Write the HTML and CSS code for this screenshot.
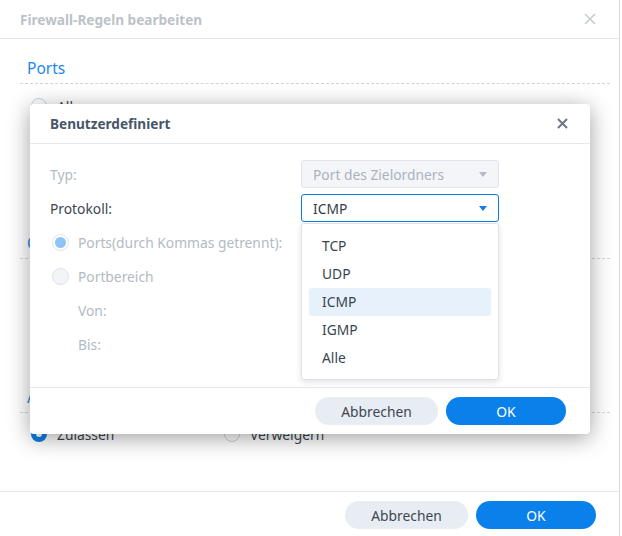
FILE: index.html
```html
<!DOCTYPE html>
<html lang="de">
<head>
<meta charset="utf-8">
<title>Firewall-Regeln bearbeiten</title>
<link rel="stylesheet" href="styles.css">
</head>
<body>
<div class="win">
  <div class="win-head">
    <span class="win-title">Firewall-Regeln bearbeiten</span>
    <svg class="win-close" width="12" height="12" viewBox="0 0 12 12"><path d="M1 1 L11 11 M11 1 L1 11" stroke="#c6ccd3" stroke-width="1.6" fill="none"/></svg>
  </div>
  <div class="win-body">
    <div class="sec-title first">Ports</div>
    <div class="rows">
      <div class="row"><span class="radio"></span><span>Alle</span></div>
      <div class="row"><span class="radio"></span></div>
      <div class="row"><span class="radio on"></span></div>
      <div class="row"></div>
    </div>
    <div class="sec-title">Quell-IP</div>
    <div class="rows">
      <div class="row"><span class="radio on"></span></div>
      <div class="row"><span class="radio"></span></div>
      <div class="row"><span class="radio"></span></div>
    </div>
    <div class="sec-title late">Aktion</div>
    <div class="rows">
      <div class="row opts">
        <span class="opt"><span class="radio on"></span><span>Zulassen</span></span>
        <span class="opt"><span class="radio"></span><span>Verweigern</span></span>
      </div>
    </div>
  </div>
  <div class="win-foot">
    <button class="btn sec w123">Abbrechen</button>
    <button class="btn pri w120">OK</button>
  </div>

  <div class="modal">
    <div class="m-head">
      <span class="m-title">Benutzerdefiniert</span>
      <svg class="m-close" width="11" height="11" viewBox="0 0 11 11"><path d="M1 1 L10 10 M10 1 L1 10" stroke="#6e7884" stroke-width="2" fill="none"/></svg>
    </div>
    <div class="m-body">
      <div class="f-row">
        <span class="f-label dis">Typ:</span>
        <div class="select disabled"><span>Port des Zielordners</span><span class="caret"></span></div>
      </div>
      <div class="f-row">
        <span class="f-label">Protokoll:</span>
        <div class="select active"><span>ICMP</span><span class="caret"></span></div>
      </div>
      <div class="f-row">
        <span class="mradio checked"></span><span class="dis">Ports(durch Kommas getrennt):</span>
      </div>
      <div class="f-row">
        <span class="mradio"></span><span class="dis">Portbereich</span>
      </div>
      <div class="f-row indent"><span class="dis">Von:</span></div>
      <div class="f-row indent"><span class="dis">Bis:</span></div>
    </div>
    <div class="m-foot">
      <button class="btn sec w123">Abbrechen</button>
      <button class="btn pri w120">OK</button>
    </div>

    <ul class="menu">
      <li>TCP</li>
      <li>UDP</li>
      <li class="sel">ICMP</li>
      <li>IGMP</li>
      <li>Alle</li>
    </ul>
  </div>
</div>
</body>
</html>
```
FILE: styles.css
```css
* { box-sizing: border-box; }
html, body {
  margin: 0;
  padding: 0;
  width: 622px;
  height: 536px;
  overflow: hidden;
  background: #ffffff;
  font-family: "Noto Sans", "Open Sans", sans-serif;
  font-size: 13.8px;
  color: #3c4651;
}
.win {
  position: relative;
  width: 620px;
  height: 536px;
  border-right: 1px solid #d8dde3;
  display: flex;
  flex-direction: column;
}
.win-head {
  height: 39px;
  flex: none;
  border-bottom: 1px solid #e3e8ee;
  display: flex;
  align-items: center;
  justify-content: space-between;
  padding: 0 23px 0 20px;
}
.win-title {
  font-weight: bold;
  color: #bcc2c9;
  font-size: 13.6px;
}
.win-body {
  flex: 1;
  padding: 0 9px 0 20px;
}
.sec-title {
  height: 28px;
  line-height: 24px;
  padding-left: 7px;
  font-size: 15.5px;
  color: #1c87ec;
  border-bottom: 1px dashed #cdd6e0;
  margin-top: 9px;
}
.sec-title.first { margin-top: 17px; }
.sec-title.late { margin-top: 22px; }
.rows {
  padding: 8px 0 0 11px;
  display: flex;
  flex-direction: column;
  gap: 6px;
}
.row {
  height: 28px;
  display: flex;
  align-items: center;
  gap: 10px;
  color: #3c4651;
}
.row.opts { gap: 0; margin-top: -1px; }
.opt {
  display: flex;
  align-items: center;
  gap: 10px;
  width: 193px;
}
.radio {
  width: 16px;
  height: 16px;
  border-radius: 50%;
  border: 1px solid #c9d1da;
  background: #fff;
  flex: none;
}
.radio.on {
  border: 5px solid #0a7fe8;
}
.win-foot {
  height: 45px;
  flex: none;
  border-top: 1px solid #e3e8ee;
  display: flex;
  justify-content: flex-end;
  align-items: flex-start;
  gap: 8px;
  padding: 9px 23px 0 0;
}
.btn {
  height: 28px;
  border: none;
  border-radius: 14px;
  font-family: inherit;
  font-size: 13.8px;
  padding: 0;
}
.btn.sec { background: #e8edf3; color: #3c4651; }
.btn.pri { background: #0a80ea; color: #ffffff; }
.w123 { width: 123px; }
.w120 { width: 120px; }

.modal {
  position: absolute;
  left: 30px;
  top: 104px;
  width: 560px;
  height: 330px;
  background: #fff;
  border-radius: 4px;
  box-shadow: 0 4px 22px rgba(0, 0, 0, 0.38);
  display: flex;
  flex-direction: column;
}
.m-head {
  height: 40px;
  flex: none;
  border-bottom: 1px solid #e2e8ef;
  display: flex;
  align-items: center;
  justify-content: space-between;
  padding: 0 22px 0 20px;
}
.m-title {
  font-weight: bold;
  font-size: 13.6px;
  color: #475667;
}
.m-body {
  flex: 1;
  padding: 16px 20px 0;
  display: flex;
  flex-direction: column;
  gap: 6px;
}
.f-row {
  height: 28px;
  display: flex;
  align-items: center;
  flex: none;
}
.f-row.indent { padding-left: 28px; }
.f-label { width: 251px; flex: none; }
.dis { color: #b3bac3; }
.select {
  width: 198px;
  height: 28px;
  border-radius: 3px;
  border: 1px solid #dfe4ea;
  display: flex;
  align-items: center;
  justify-content: space-between;
  padding: 0 11px 0 11px;
}
.select.disabled { background: #f3f5f8; color: #abb3bd; }
.select.active { border-color: #0a7fe8; color: #333d48; }
.caret {
  width: 0;
  height: 0;
  border-left: 4px solid transparent;
  border-right: 4px solid transparent;
  border-top: 5px solid #b5bcc5;
}
.select.active .caret { border-top-color: #0a7fe8; }
.mradio {
  width: 17px;
  height: 17px;
  margin: 0 9px 0 2px;
  border-radius: 50%;
  border: 1px solid #dde3ea;
  background: #f2f4f8;
  flex: none;
  position: relative;
}
.mradio.checked {
  background: #fff;
}
.mradio.checked::after {
  content: "";
  position: absolute;
  left: 2px;
  top: 2px;
  width: 11px;
  height: 11px;
  border-radius: 50%;
  background: #8ec3f5;
}
.m-foot {
  height: 47px;
  flex: none;
  border-top: 1px solid #e2e8ef;
  display: flex;
  justify-content: flex-end;
  align-items: flex-start;
  gap: 8px;
  padding: 9px 24px 0 0;
}
.menu {
  position: absolute;
  left: 271px;
  top: 119px;
  width: 198px;
  height: 157px;
  margin: 0;
  list-style: none;
  padding: 8px 7px;
  background: #fff;
  border: 1px solid #dce2e9;
  border-radius: 3px;
  box-shadow: 0 2px 6px rgba(0, 0, 0, 0.12);
}
.menu li {
  height: 28px;
  line-height: 28px;
  padding-left: 13px;
  border-radius: 3px;
  color: #3a4450;
}
.menu li.sel { background: #e6f1fc; }
```
